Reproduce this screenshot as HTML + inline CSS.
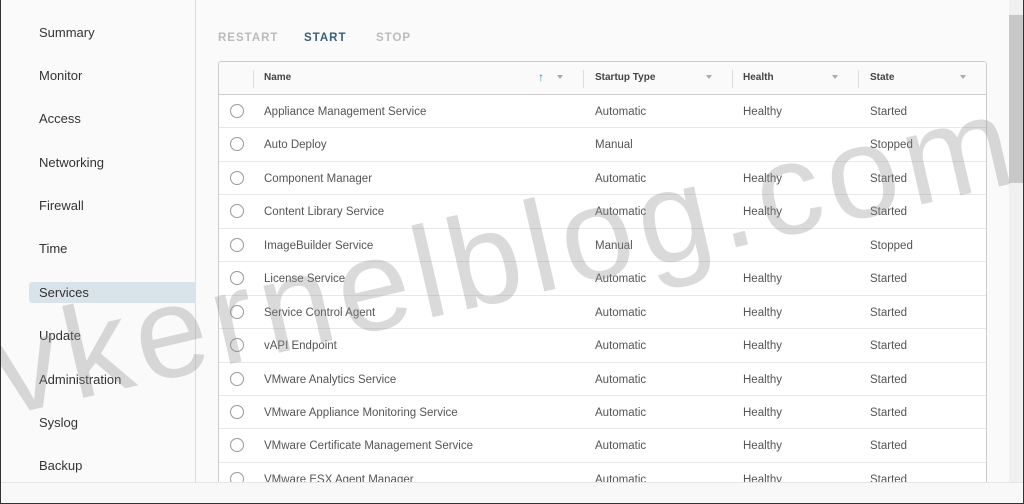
<!DOCTYPE html>
<html><head><style>
*{margin:0;padding:0;box-sizing:border-box}
body{width:1024px;height:504px;overflow:hidden;background:#fafafa;font-family:"Liberation Sans",sans-serif;position:relative;border:1px solid #333;border-top:none}
.side{position:absolute;left:0;top:0;width:195px;height:482px;border-right:1px solid #ddd;background:#fafafa}
.side div{position:absolute;left:28px;width:167px;height:21px;padding-left:10px;font-size:13px;color:#333;line-height:21px}
.side .act{background:#d9e4ea;border-radius:3px 0 0 3px}
.btn{position:absolute;top:32px;font-size:11.5px;letter-spacing:1px;font-weight:bold;color:#bbb}
.tbl{position:absolute;left:217px;top:61px;width:769px;height:430px;border:1px solid #ccc;border-radius:3px;background:#fff;overflow:hidden}
.hdr{height:33px;background:#fafafa;border-bottom:1px solid #ccc;position:relative;font-size:10px;font-weight:bold;color:#444}
.hdr span{position:absolute;top:10px}
.hdr i{position:absolute;top:8px;width:1px;height:18px;background:#ddd}
.f{position:absolute;top:13px;width:0;height:0;border-left:3px solid transparent;border-right:3px solid transparent;border-top:4px solid #aaa}
.row{height:33.45px;border-bottom:1px solid #e8e8e8;position:relative;font-size:11.5px;color:#555}
.row span{position:absolute;top:11px}
.rad{position:absolute;left:11px;top:9px;width:14px;height:14px;border:1px solid #999;border-radius:50%}
.bottom{position:absolute;left:0;top:482px;width:1022px;height:21px;background:#f8f8f8;border-top:1px solid #e5e5e5}
.sb{position:absolute;left:1008px;top:0;width:14px;height:482px;background:#f0f0f0}
.th{position:absolute;left:1008px;top:15px;width:14px;height:168px;background:#c8c8c8}
</style></head><body>
<div class="side">
<div style="top:22px">Summary</div><div style="top:65px">Monitor</div><div style="top:108px">Access</div><div style="top:152px">Networking</div><div style="top:195px">Firewall</div><div style="top:238px">Time</div><div class="act" style="top:282px">Services</div><div style="top:325px">Update</div><div style="top:369px">Administration</div><div style="top:412px">Syslog</div><div style="top:455px">Backup</div>
</div>
<div class="btn" style="left:217px">RESTART</div>
<div class="btn" style="left:303px;color:#3a5f7a">START</div>
<div class="btn" style="left:375px">STOP</div>
<div class="tbl">
<div class="hdr"><i style="left:34px"></i><span style="left:45px">Name</span><span style="left:319px;top:8px;color:#1a8fd6;font-size:12px">↑</span><b class="f" style="left:338px"></b><i style="left:364px"></i><span style="left:376px">Startup Type</span><b class="f" style="left:487px"></b><i style="left:513px"></i><span style="left:524px">Health</span><b class="f" style="left:613px"></b><i style="left:639px"></i><span style="left:651px">State</span><b class="f" style="left:741px"></b></div>
<div class="row"><b class="rad"></b><span style="left:45px">Appliance Management Service</span><span style="left:376px">Automatic</span><span style="left:524px">Healthy</span><span style="left:651px">Started</span></div>
<div class="row"><b class="rad"></b><span style="left:45px">Auto Deploy</span><span style="left:376px">Manual</span><span style="left:651px">Stopped</span></div>
<div class="row"><b class="rad"></b><span style="left:45px">Component Manager</span><span style="left:376px">Automatic</span><span style="left:524px">Healthy</span><span style="left:651px">Started</span></div>
<div class="row"><b class="rad"></b><span style="left:45px">Content Library Service</span><span style="left:376px">Automatic</span><span style="left:524px">Healthy</span><span style="left:651px">Started</span></div>
<div class="row"><b class="rad"></b><span style="left:45px">ImageBuilder Service</span><span style="left:376px">Manual</span><span style="left:651px">Stopped</span></div>
<div class="row"><b class="rad"></b><span style="left:45px">License Service</span><span style="left:376px">Automatic</span><span style="left:524px">Healthy</span><span style="left:651px">Started</span></div>
<div class="row"><b class="rad"></b><span style="left:45px">Service Control Agent</span><span style="left:376px">Automatic</span><span style="left:524px">Healthy</span><span style="left:651px">Started</span></div>
<div class="row"><b class="rad"></b><span style="left:45px">vAPI Endpoint</span><span style="left:376px">Automatic</span><span style="left:524px">Healthy</span><span style="left:651px">Started</span></div>
<div class="row"><b class="rad"></b><span style="left:45px">VMware Analytics Service</span><span style="left:376px">Automatic</span><span style="left:524px">Healthy</span><span style="left:651px">Started</span></div>
<div class="row"><b class="rad"></b><span style="left:45px">VMware Appliance Monitoring Service</span><span style="left:376px">Automatic</span><span style="left:524px">Healthy</span><span style="left:651px">Started</span></div>
<div class="row"><b class="rad"></b><span style="left:45px">VMware Certificate Management Service</span><span style="left:376px">Automatic</span><span style="left:524px">Healthy</span><span style="left:651px">Started</span></div>
<div class="row"><b class="rad"></b><span style="left:45px">VMware ESX Agent Manager</span><span style="left:376px">Automatic</span><span style="left:524px">Healthy</span><span style="left:651px">Started</span></div>
</div>
<div class="sb"></div><div class="th"></div>
<div class="bottom"></div>
<svg style="position:absolute;left:0;top:0" width="1024" height="504"><text x="4" y="416" transform="rotate(-13 4 416)" font-family="Liberation Sans, sans-serif" font-size="130" textLength="1040" fill="rgba(140,140,140,0.32)">vkernelblog.com</text></svg>
</body></html>
